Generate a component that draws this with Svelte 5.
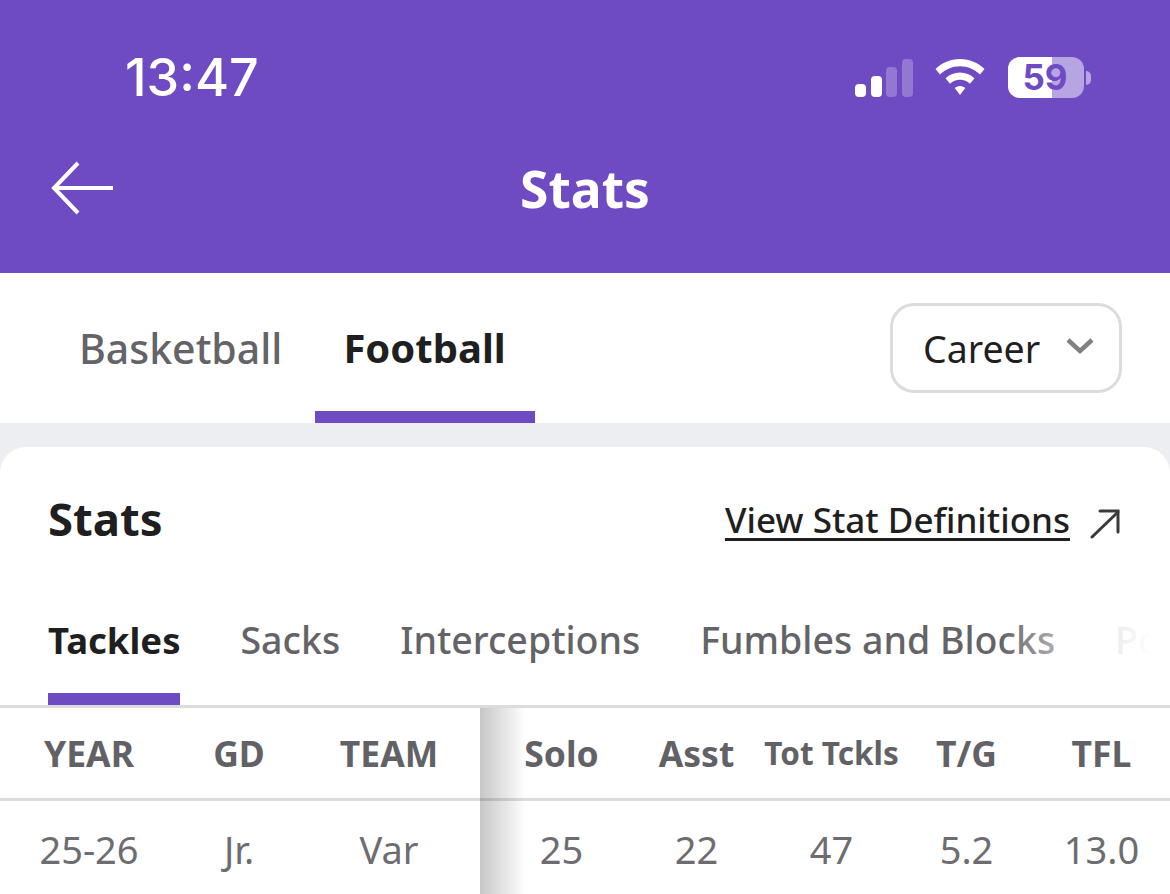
<script lang="ts">
	const sportTabs = [
		{ label: 'Basketball', active: false },
		{ label: 'Football', active: true }
	];
	const statTabs = [
		{ label: 'Tackles', active: true },
		{ label: 'Sacks', active: false },
		{ label: 'Interceptions', active: false },
		{ label: 'Fumbles and Blocks', active: false },
		{ label: 'Points', active: false }
	];
	const fixedHead = ['YEAR', 'GD', 'TEAM'];
	const scrollHead = ['Solo', 'Asst', 'Tot Tckls', 'T/G', 'TFL'];
	const fixedRow = ['25-26', 'Jr.', 'Var'];
	const scrollRow = ['25', '22', '47', '5.2', '13.0'];
</script>

<div class="page">
	<header class="top">
		<div class="status">
			<span class="time">13:47</span>
			<div class="status-icons">
				<svg class="signal" width="58" height="38" viewBox="0 0 58 38">
					<rect x="0" y="25" width="11" height="13" rx="4" fill="#fff" />
					<rect x="16" y="17" width="11" height="21" rx="4" fill="#fff" />
					<rect x="31" y="8" width="11" height="30" rx="4" fill="#fff" fill-opacity="0.25" />
					<rect x="47" y="0" width="11" height="38" rx="4" fill="#fff" fill-opacity="0.25" />
				</svg>
				<svg class="wifi" width="50" height="38" viewBox="0 0 50 38">
					<path d="M25 0C15.500 0 7 3.800 0.500 10L5 15.500C10.300 10.300 17.300 7.200 25 7.200C32.700 7.200 39.700 10.300 45 15.500L49.500 10C43 3.800 34.500 0 25 0Z" fill="#fff" />
					<path d="M25 13.500C19.500 13.500 14.500 15.600 10.500 19.300L15 24.700C17.700 22.200 21.200 20.700 25 20.700C28.800 20.700 32.300 22.200 35 24.700L39.500 19.300C35.500 15.600 30.500 13.500 25 13.500Z" fill="#fff" />
					<path d="M25 27C23 27 21.200 27.700 19.700 29L25 36L30.300 29C28.800 27.700 27 27 25 27Z" fill="#fff" />
				</svg>
				<div class="battery">
					<div class="battery-body">
						<div class="battery-fill"></div>
						<span class="battery-num">59</span>
					</div>
					<span class="battery-cap"></span>
				</div>
			</div>
		</div>
		<div class="nav">
			<svg class="back" width="64" height="54" viewBox="0 0 64 54" fill="none" stroke="#fff" stroke-width="4">
				<path d="M62 27H3" />
				<path d="M27 2L3 27L27 52" />
			</svg>
			<h1 class="nav-title">Stats</h1>
		</div>
	</header>

	<section class="sports">
		<nav class="sport-tabs">
			{#each sportTabs as tab}
				<div class="sport-tab" class:active={tab.active}>{tab.label}</div>
			{/each}
		</nav>
		<div class="select">
			<span>Career</span>
			<svg width="28" height="18" viewBox="0 0 28 18" fill="none" stroke="#808084" stroke-width="4.500">
				<path d="M2 3L14 14L26 3" />
			</svg>
		</div>
	</section>

	<main class="card">
		<div class="card-head">
			<h2>Stats</h2>
			<div class="defs">
				<span class="defs-link">View Stat Definitions</span>
				<svg class="defs-icon" width="30" height="30" viewBox="0 0 30 30" fill="none" stroke="#3a3a3c" stroke-width="3" stroke-linecap="round">
					<path d="M2 28L28 3" />
					<path d="M10 2H28V23" />
				</svg>
			</div>
		</div>

		<div class="stat-tabs">
			{#each statTabs as tab}
				<div class="stat-tab" class:active={tab.active}>{tab.label}</div>
			{/each}
			<div class="tabs-fade"></div>
		</div>

		<div class="table">
			<div class="row head">
				<div class="fixed">
					{#each fixedHead as cell}<div class="cell">{cell}</div>{/each}
				</div>
				<div class="scroll">
					{#each scrollHead as cell}
						<div class="cell" class:tight={cell === 'Tot Tckls'}>{cell}</div>
					{/each}
				</div>
			</div>
			<div class="row body">
				<div class="fixed">
					{#each fixedRow as cell}<div class="cell">{cell}</div>{/each}
				</div>
				<div class="scroll">
					{#each scrollRow as cell}<div class="cell">{cell}</div>{/each}
				</div>
			</div>
			<div class="shade"></div>
		</div>
	</main>
</div>

<style>
	:global(body) {
		margin: 0;
		background: #edeef2;
	}

	.page {
		width: 1170px;
		height: 894px;
		overflow: hidden;
		font-family: 'Noto Sans', 'Open Sans', sans-serif;
		color: #1f1f21;
	}

	.top {
		height: 273px;
		background: #6e4bc3;
		color: #fff;
		box-sizing: border-box;
	}

	.status {
		height: 140px;
		padding: 38px 79px 0 125px;
		box-sizing: border-box;
		display: flex;
		justify-content: space-between;
		align-items: flex-start;
	}

	.time {
		font-family: Inter, sans-serif;
		font-size: 52px;
		font-weight: 500;
		line-height: 80px;
	}

	.status-icons {
		display: flex;
		align-items: center;
		margin-top: 19px;
	}

	.wifi {
		margin-left: 22px;
	}

	.battery {
		display: flex;
		align-items: center;
		margin-left: 23px;
	}

	.battery-body {
		position: relative;
		width: 76px;
		height: 41px;
		border-radius: 12px;
		background: rgba(255, 255, 255, 0.5);
		overflow: hidden;
	}

	.battery-fill {
		width: 44px;
		height: 100%;
		background: #fff;
	}

	.battery-num {
		position: absolute;
		inset: 0;
		padding-right: 2px;
		text-align: center;
		font-family: Inter, sans-serif;
		font-size: 35px;
		font-weight: 700;
		line-height: 41px;
		color: #6e4bc3;
	}

	.battery-cap {
		width: 5px;
		height: 14px;
		margin-left: 2px;
		border-radius: 0 7px 7px 0;
		background: rgba(255, 255, 255, 0.5);
	}

	.nav {
		position: relative;
		height: 100px;
		display: flex;
		align-items: center;
		justify-content: center;
	}

	.back {
		position: absolute;
		left: 51px;
		top: 21px;
	}

	.nav-title {
		margin: 0 0 4px;
		font-size: 51.500px;
		font-weight: 700;
		line-height: 60px;
	}

	.sports {
		height: 150px;
		background: #fff;
		display: flex;
		justify-content: space-between;
		box-sizing: border-box;
		padding: 0 48px 0 50px;
	}

	.sport-tabs {
		display: flex;
	}

	.sport-tab {
		padding: 0 29px;
		height: 150px;
		box-sizing: border-box;
		font-size: 41px;
		line-height: 150px;
		font-weight: 500;
		color: #646468;
		white-space: nowrap;
	}

	.sport-tab.active {
		padding: 0 29px 0 28px;
		margin-left: 4px;
		color: #1f1f21;
		font-size: 40px;
		font-weight: 700;
		border-bottom: 12px solid #6e4bc3;
	}

	.select {
		margin-top: 30px;
		width: 232px;
		height: 90px;
		box-sizing: border-box;
		border: 3px solid #dcdcdf;
		border-radius: 24px;
		display: flex;
		align-items: center;
		gap: 26px;
		padding: 0 0 0 30px;
		font-size: 37.500px;
	}

	.select svg {
		margin-bottom: 4px;
	}

	.card {
		margin-top: 24px;
		height: 447px;
		background: #fff;
		border-radius: 26px 26px 0 0;
	}

	.card-head {
		height: 146px;
		padding: 0 50px 0 48px;
		display: flex;
		justify-content: space-between;
		align-items: center;
		box-sizing: border-box;
	}

	.card-head h2 {
		margin: 0 0 4px;
		font-size: 45.500px;
		font-weight: 700;
		line-height: 60px;
	}

	.defs {
		display: flex;
		align-items: center;
		gap: 20px;
		margin-bottom: 2px;
	}

	.defs-link {
		font-size: 35px;
		font-weight: 500;
		text-decoration: underline;
		text-underline-offset: 5px;
		text-decoration-thickness: 3px;
	}

	.defs-icon {
		margin-top: 10px;
	}

	.stat-tabs {
		position: relative;
		height: 112px;
		padding-left: 48px;
		display: flex;
		gap: 60px;
		overflow: hidden;
		box-sizing: border-box;
		white-space: nowrap;
	}

	.stat-tab {
		height: 112px;
		box-sizing: border-box;
		padding-top: 20px;
		font-size: 37.500px;
		font-weight: 500;
		line-height: 54px;
		color: #646468;
	}

	.stat-tab.active {
		color: #1f1f21;
		font-size: 36.500px;
		font-weight: 700;
		border-bottom: 12px solid #6e4bc3;
	}

	.tabs-fade {
		position: absolute;
		right: 0;
		top: 0;
		bottom: 0;
		width: 170px;
		background: linear-gradient(90deg, rgba(255, 255, 255, 0), rgba(255, 255, 255, 0.5) 35%, rgba(255, 255, 255, 0.88) 68%, #fff 90%);
	}

	.table {
		position: relative;
		border-top: 3px solid #dcdcdf;
	}

	.row {
		display: flex;
	}

	.fixed {
		width: 480px;
		box-sizing: border-box;
		padding-left: 14px;
		display: grid;
		grid-template-columns: repeat(3, 150px);
	}

	.scroll {
		width: 690px;
		box-sizing: border-box;
		padding-left: 14px;
		display: grid;
		grid-template-columns: repeat(5, 135px);
	}

	.cell {
		text-align: center;
		white-space: nowrap;
		margin: 0 -10px;
	}

	.head {
		height: 93px;
		box-sizing: border-box;
		border-bottom: 3px solid #dcdcdf;
		font-size: 35.500px;
		font-weight: 700;
		line-height: 90px;
		color: #626266;
	}

	.cell.tight {
		font-size: 31.500px;
	}

	.body {
		height: 93px;
		font-size: 38px;
		line-height: 96px;
		color: #6d6d71;
	}

	.shade {
		position: absolute;
		left: 480px;
		top: 0;
		bottom: 0;
		width: 46px;
		background: linear-gradient(90deg, rgba(0, 0, 0, 0.22), rgba(0, 0, 0, 0));
	}
</style>
